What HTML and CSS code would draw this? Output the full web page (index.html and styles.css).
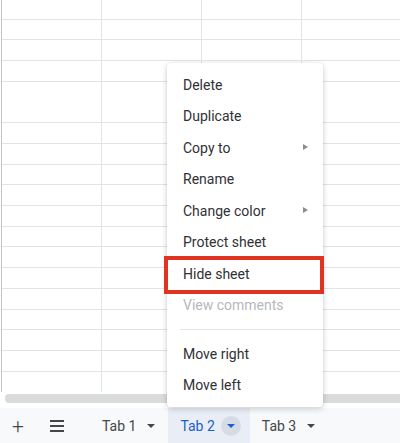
FILE: index.html
```html
<!DOCTYPE html>
<html>
  <head>
    <title>Sheet tabs menu</title>
    <link rel="stylesheet" href="styles.css">
  </head>
  <body>
    <div id="feuille">
      <div class="grille"></div>
      <div class="defil"><div class="barre"></div></div>
    </div>

    <div id="onglets">
      <div class="bouton plus">+</div>
      <div class="bouton liste">
        <span></span><span></span><span></span>
      </div>
      <div class="onglet">Tab 1 <i class="fleche"></i></div>
      <div class="onglet actif">Tab 2 <b class="rond"><i class="fleche"></i></b></div>
      <div class="onglet">Tab 3 <i class="fleche"></i></div>
    </div>

    <!-- menu contextuel de l'onglet -->
    <ul id="menu">
      <li>Delete</li>
      <li>Duplicate</li>
      <li>Copy to <i class="sous"></i></li>
      <li>Rename</li>
      <li>Change color <i class="sous"></i></li>
      <li>Protect sheet</li>
      <li>Hide sheet</li>
      <li class="inactif">View comments</li>
      <li class="trait"></li>
      <li>Move right</li>
      <li>Move left</li>
    </ul>
    <div id="cadre"></div>
  </body>
</html>
```
FILE: styles.css
```css
body {
 margin : 0;
 width : 400px;
 height : 443px;
 overflow : hidden;
 font-family : Roboto, "Liberation Sans", Arial, sans-serif;
 background-color : white;
}

#feuille {
 height : 408px;
 display : flex;
 flex-direction : column;
}

.grille {
 flex : 1;
 border-left : 1px solid #c4c7c5;
 margin-left : 1px;
 background-color : white;
 background-image :
   repeating-linear-gradient(to right, transparent 0, transparent 99px, #e2e3e3 99px, #e2e3e3 100px),
   repeating-linear-gradient(to bottom, transparent 0, transparent 19.7px, #e2e3e3 19.7px, #e2e3e3 20.7px);
 background-position : 0 0, 0 -1px;
}

.defil {
 height : 16px;
 padding : 2px 0 3px 5px;
 box-sizing : border-box;
 background-color : white;
}

.barre {
 height : 9px;
 background-color : #dadbdb;
 border-radius : 4px 0 0 4px;
}

#onglets {
 height : 35px;
 background-color : #f8f9fa;
 display : flex;
 align-items : stretch;
 color : #444746;
 font-size : 14px;
}

.bouton {
 width : 36px;
 display : flex;
 align-items : center;
 justify-content : center;
}

.plus {
 font-size : 21px;
 font-weight : 300;
 color : #444746;
}

.liste {
 margin-left : 3px;
 flex-direction : column;
 gap : 3px;
}

.liste span {
 display : block;
 width : 14px;
 height : 2px;
 background-color : #444746;
}

.onglet {
 display : flex;
 align-items : center;
 gap : 11px;
 padding : 0 12px;
}

.onglet:nth-child(3) {
 margin-left : 15px;
 padding-right : 13px;
}

.fleche {
 width : 0;
 height : 0;
 border-left : 4px solid transparent;
 border-right : 4px solid transparent;
 border-top : 4px solid #444746;
}

.actif {
 background-color : #e9eef6;
 color : #1a5fd0;
 padding-right : 9px;
 gap : 6px;
}

.rond {
 width : 20px;
 height : 20px;
 border-radius : 50%;
 background-color : #d6dce6;
 display : flex;
 align-items : center;
 justify-content : center;
}

.rond .fleche {
 border-top-color : #1a5fd0;
}

#menu {
 position : absolute;
 left : 167px;
 top : 63px;
 width : 156px;
 margin : 0;
 padding : 6px 0;
 list-style-type : none;
 background-color : white;
 border-radius : 4px;
 box-shadow : 0 2px 6px rgba(0,0,0,0.18), 0 0 2px rgba(0,0,0,0.08);
 font-size : 14px;
 color : #303134;
}

#menu li {
 height : 31.5px;
 padding-left : 16px;
 display : flex;
 align-items : center;
 position : relative;
}

#menu li.inactif {
 color : #b5b8bc;
}

#menu li.trait {
 height : 1px;
 margin : 8px 0 8px 13px;
 padding : 0;
 background-color : #e5e6e7;
}

.sous {
 position : absolute;
 left : 136px;
 top : 12px;
 width : 0;
 height : 0;
 border-top : 3.5px solid transparent;
 border-bottom : 3.5px solid transparent;
 border-left : 5px solid #8a8d91;
}

#cadre {
 position : absolute;
 left : 164px;
 top : 256px;
 width : 160px;
 height : 38px;
 box-sizing : border-box;
 border : 4px solid #e03321;
}
```
